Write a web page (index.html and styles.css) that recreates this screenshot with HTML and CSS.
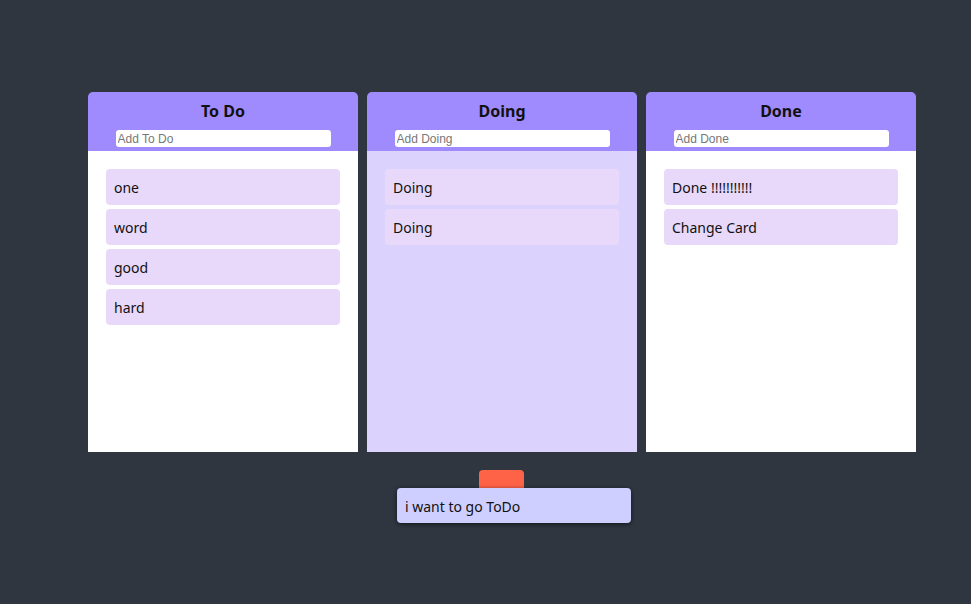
FILE: index.html
```html
<!DOCTYPE html>
<html>
<head>
<meta charset="utf-8">
<link rel="stylesheet" href="styles.css">
</head>
<body>
<div class="page">
  <div class="boards">
    <div class="board">
      <div class="board-head">
        <h2 class="board-title">To Do</h2>
        <input class="board-input" placeholder="Add To Do">
      </div>
      <div class="board-body">
        <div class="card">one</div>
        <div class="card">word</div>
        <div class="card">good</div>
        <div class="card">hard</div>
      </div>
    </div>
    <div class="board">
      <div class="board-head">
        <h2 class="board-title">Doing</h2>
        <input class="board-input" placeholder="Add Doing">
      </div>
      <div class="board-body board-body-over">
        <div class="card">Doing</div>
        <div class="card">Doing</div>
      </div>
    </div>
    <div class="board">
      <div class="board-head">
        <h2 class="board-title">Done</h2>
        <input class="board-input" placeholder="Add Done">
      </div>
      <div class="board-body">
        <div class="card">Done !!!!!!!!!!!</div>
        <div class="card">Change Card</div>
      </div>
    </div>
  </div>
  <div class="trash-area">
    <div class="trash"></div>
    <div class="drag-card">i want to go ToDo</div>
  </div>
</div>
</body>
</html>
```
FILE: styles.css
```css
html, body {
  margin: 0;
  padding: 0;
  height: 100%;
}
body {
  background: #2f3640;
  font-family: "Noto Sans", "Noto Sans CJK KR", sans-serif;
  color: #111;
}
.page {
  padding: 92px 0 0 88px;
  width: 828px;
}
.boards {
  display: flex;
  gap: 9px;
}
.board {
  width: 270px;
  display: flex;
  flex-direction: column;
}
.board-head {
  background: #a08bfe;
  border-radius: 5px 5px 0 0;
  height: 59px;
  display: flex;
  flex-direction: column;
  align-items: center;
  box-sizing: border-box;
  padding-top: 8px;
}
.board-title {
  margin: 0;
  font-size: 16px;
  font-weight: 700;
  line-height: 22px;
  height: 22px;
}
.board-input {
  margin-top: 8px;
  width: 215px;
  height: 17px;
  box-sizing: border-box;
  border: none;
  border-radius: 3px;
  padding: 0 2px;
  font-family: "Liberation Sans", Arial, sans-serif;
  font-size: 12px;
  background: #fff;
}
.board-input::placeholder {
  color: #777;
}
.board-body {
  background: #fff;
  height: 301px;
  box-sizing: border-box;
  padding: 18px;
  display: flex;
  flex-direction: column;
  gap: 4px;
}
.board-body-over {
  background: #dcd2fe;
}
.card {
  background: #e8d9fb;
  border-radius: 4px;
  height: 36px;
  box-sizing: border-box;
  padding: 1px 8px 0;
  display: flex;
  align-items: center;
  font-size: 14px;
}
.trash-area {
  position: relative;
  height: 90px;
  margin-top: 18px;
}
.trash {
  margin-left: 391px;
  width: 45px;
  height: 22px;
  background: #ff6347;
  border-radius: 4px 4px 0 0;
}
.drag-card {
  position: absolute;
  left: 309px;
  top: 18px;
  width: 234px;
  height: 35px;
  box-sizing: border-box;
  padding: 1px 8px 0;
  display: flex;
  align-items: center;
  background: #cfcfff;
  border-radius: 4px;
  box-shadow: 0 1px 4px rgba(0, 0, 0, 0.6);
  font-size: 14px;
}
```
